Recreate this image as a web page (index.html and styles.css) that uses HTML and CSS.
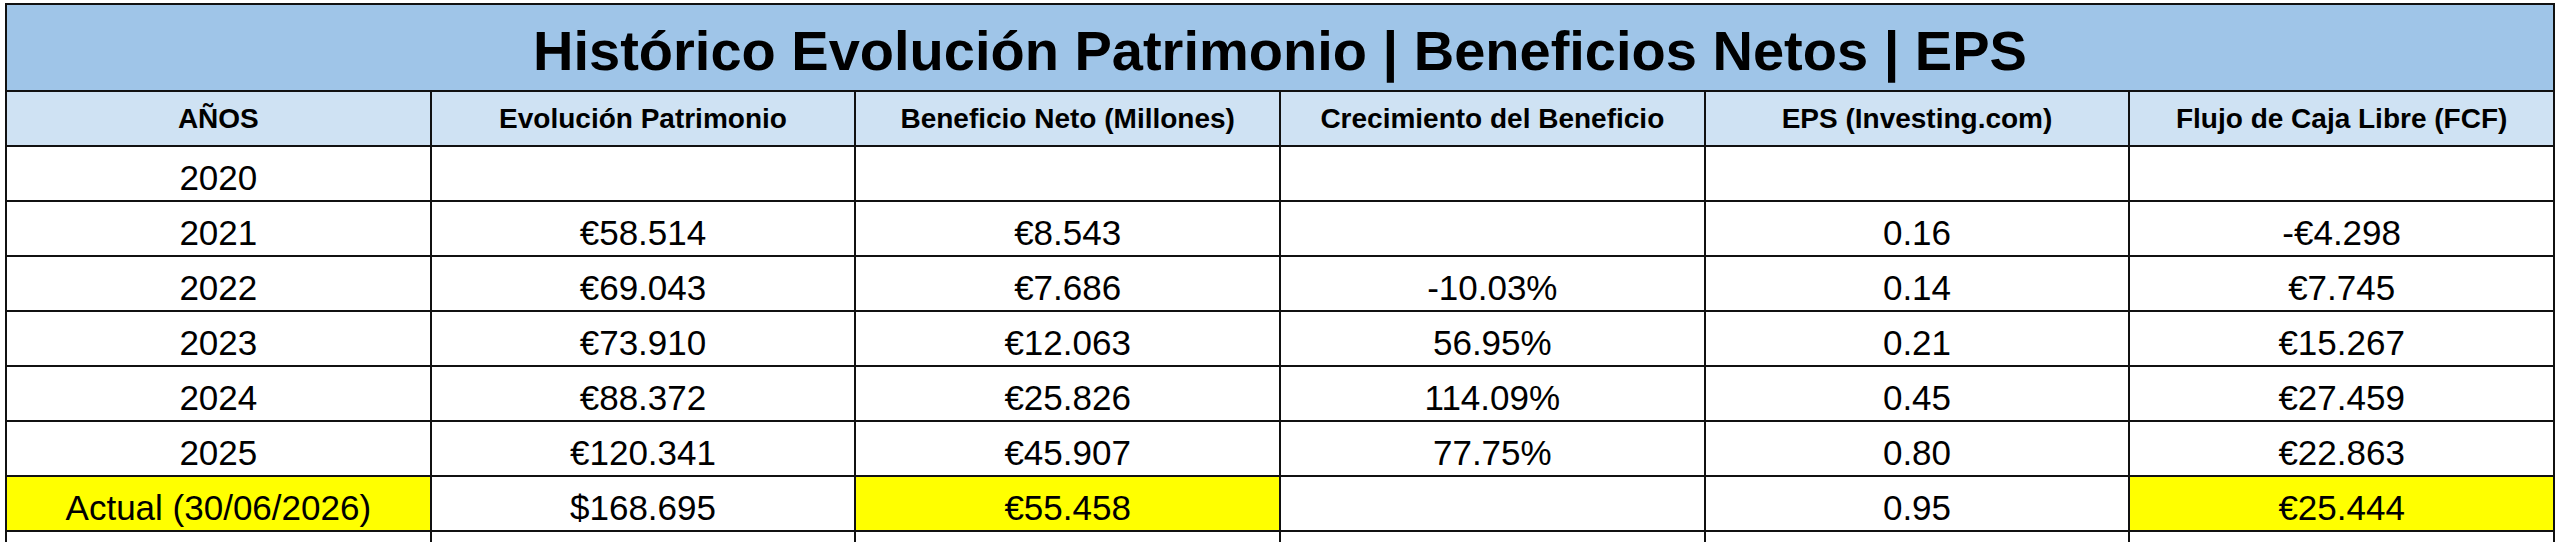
FILE: index.html
```html
<!DOCTYPE html>
<html lang="es">
<head>
<meta charset="utf-8">
<title>Histórico Evolución Patrimonio | Beneficios Netos | EPS</title>
<link rel="stylesheet" href="styles.css">
</head>
<body>
<div class="sheet">
  <div class="cell title">Histórico Evolución Patrimonio | Beneficios Netos | EPS</div>

  <div class="cell hd">AÑOS</div>
  <div class="cell hd">Evolución Patrimonio</div>
  <div class="cell hd">Beneficio Neto (Millones)</div>
  <div class="cell hd">Crecimiento del Beneficio</div>
  <div class="cell hd">EPS (Investing.com)</div>
  <div class="cell hd">Flujo de Caja Libre (FCF)</div>

  <div class="cell">2020</div>
  <div class="cell"></div>
  <div class="cell"></div>
  <div class="cell"></div>
  <div class="cell"></div>
  <div class="cell"></div>

  <div class="cell">2021</div>
  <div class="cell">€58.514</div>
  <div class="cell">€8.543</div>
  <div class="cell"></div>
  <div class="cell">0.16</div>
  <div class="cell">-€4.298</div>

  <div class="cell">2022</div>
  <div class="cell">€69.043</div>
  <div class="cell">€7.686</div>
  <div class="cell">-10.03%</div>
  <div class="cell">0.14</div>
  <div class="cell">€7.745</div>

  <div class="cell">2023</div>
  <div class="cell">€73.910</div>
  <div class="cell">€12.063</div>
  <div class="cell">56.95%</div>
  <div class="cell">0.21</div>
  <div class="cell">€15.267</div>

  <div class="cell">2024</div>
  <div class="cell">€88.372</div>
  <div class="cell">€25.826</div>
  <div class="cell">114.09%</div>
  <div class="cell">0.45</div>
  <div class="cell">€27.459</div>

  <div class="cell">2025</div>
  <div class="cell">€120.341</div>
  <div class="cell">€45.907</div>
  <div class="cell">77.75%</div>
  <div class="cell">0.80</div>
  <div class="cell">€22.863</div>

  <div class="cell hl">Actual (30/06/2026)</div>
  <div class="cell">$168.695</div>
  <div class="cell hl">€55.458</div>
  <div class="cell"></div>
  <div class="cell">0.95</div>
  <div class="cell hl">€25.444</div>

  <div class="cell tail"></div>
  <div class="cell tail"></div>
  <div class="cell tail"></div>
  <div class="cell tail"></div>
  <div class="cell tail"></div>
  <div class="cell tail"></div>
</div>
</body>
</html>
```

FILE: styles.css
```css
html, body {
  margin: 0;
  padding: 0;
  background: #ffffff;
  overflow: hidden;
}

body {
  font-family: "Liberation Sans", Arial, sans-serif;
  color: #000000;
}

.sheet {
  display: grid;
  grid-template-columns: repeat(6, 1fr);
  grid-template-rows: 87px repeat(8, 55px) 10px;
  width: 2550px;
  box-sizing: border-box;
  margin: 3px 0 0 5px;
  border-left: 2px solid #111111;
  border-top: 2px solid #111111;
}

.cell {
  box-sizing: border-box;
  border-right: 2px solid #111111;
  border-bottom: 2px solid #111111;
  display: flex;
  align-items: flex-end;
  justify-content: center;
  padding-bottom: 3px;
  font-size: 35px;
  line-height: 39px;
  white-space: nowrap;
  background: #ffffff;
}

.title {
  grid-column: 1 / -1;
  align-items: center;
  padding: 6px 0 0 0;
  background: #9fc5e8;
  font-size: 56px;
  font-weight: bold;
  line-height: 63px;
}

.hd {
  background: #cfe2f3;
  font-size: 28px;
  font-weight: bold;
  line-height: 31px;
  align-items: center;
  padding: 0;
}

.hl {
  background: #ffff00;
}

.tail {
  border-bottom: 0;
  padding: 0;
}
```
